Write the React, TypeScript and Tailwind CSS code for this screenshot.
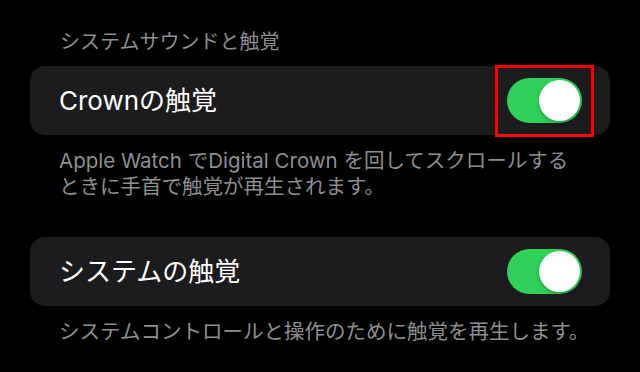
import React from 'react';

const font = { fontFamily: 'Inter, "Noto Sans CJK JP", sans-serif' };

function Toggle({ highlighted }: { highlighted?: boolean }) {
    return (
        <div className="relative">
            <div className="w-[75px] h-[45px] rounded-full bg-[#30d158] p-[2px] flex justify-end items-center">
                <div className="w-[41px] h-[41px] rounded-full bg-white shadow-[0_2px_4px_rgba(0,0,0,0.25)]" />
            </div>
            {/* highlight box drawn over the screenshot */}
            {highlighted && (
                <div className="absolute left-[-12px] top-[-13px] w-[99px] h-[72px] border-[3px] border-[#ff0000]" />
            )}
        </div>
    );
}

function Row({ label, highlighted }: { label: string; highlighted?: boolean }) {
    return (
        <div className="h-[69px] rounded-[15px] bg-[#1c1c1e] flex items-center justify-between pl-[29px] pr-[28px]">
            <span className="text-[26px] text-white leading-none">{label}</span>
            <Toggle highlighted={highlighted} />
        </div>
    );
}

export default function App() {
    return (
        <div className="w-[640px] h-[372px] bg-black overflow-hidden px-[30px] pt-[30px]" style={font}>
            <div className="pl-[30px] text-[20px] leading-[24px] text-[#8e8e93] mb-[12px]">
                システムサウンドと触覚
            </div>
            <Row label="Crownの触覚" highlighted />
            <div className="pl-[29px] mt-[13px] text-[20.5px] leading-[26px] text-[#8e8e93]">
                Apple Watch でDigital Crown を回してスクロールする
                <br />
                ときに手首で触覚が再生されます。
            </div>
            <div className="mt-[37px]">
                <Row label="システムの触覚" />
            </div>
            <div className="pl-[29px] mt-[13px] text-[20.5px] leading-[26px] text-[#8e8e93]">
                システムコントロールと操作のために触覚を再生します。
            </div>
        </div>
    );
}
